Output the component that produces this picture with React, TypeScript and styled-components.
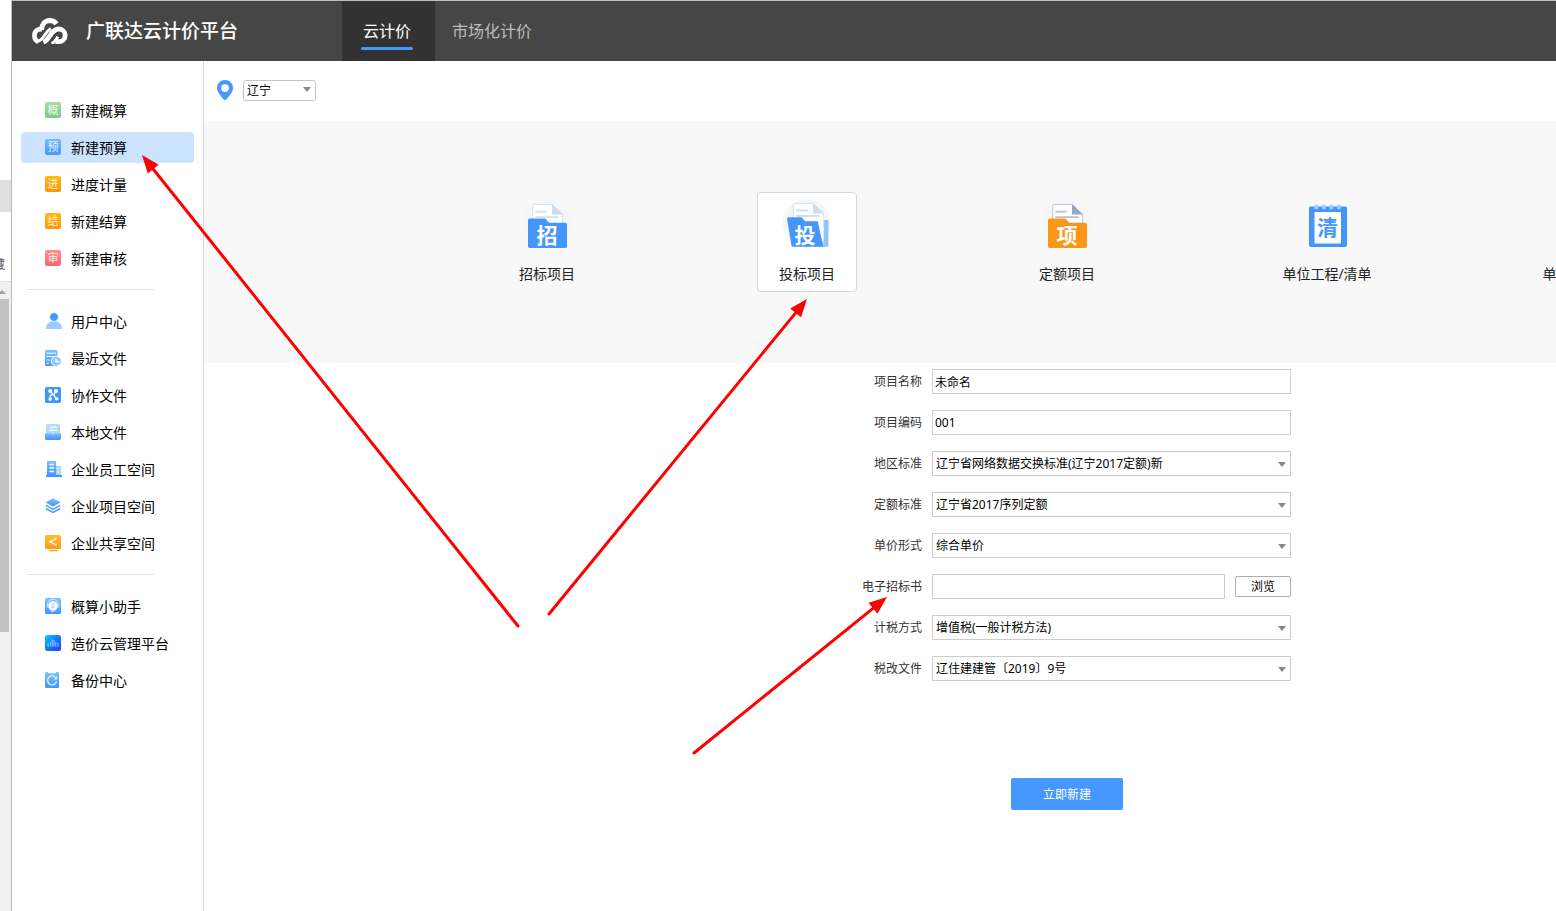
import React from "react";
import styled, { createGlobalStyle, css } from "styled-components";

const GlobalStyle = createGlobalStyle`
  *, *::before, *::after { box-sizing: border-box; }
  body {
    margin: 0;
    background: #fff;
    color: #000;
    font-family: "Noto Sans", "Noto Sans CJK SC", sans-serif;
    font-size: 14px;
    overflow-x: hidden;
  }
  button, input, select { font-family: inherit; }
`;

/* ---------- page frame ---------- */

const Page = styled.div`
  position: relative;
  display: flex;
  min-height: 100vh;
  overflow: hidden;
`;

const BackWindow = styled.div`
  flex: none;
  display: flex;
  flex-direction: column;
  width: 12px;
  border-right: 1px solid #b9b9b9;
  overflow: hidden;
`;

const BackRow = styled.div`
  margin-top: 180px;
  height: 32px;
  background: #dfdfdf;
`;

const BackText = styled.div`
  display: flex;
  justify-content: flex-end;
  height: 69px;
  padding: 43px 6px 0 0;
  font-size: 12px;
  line-height: 20px;
  color: #555;
`;

const BackScroll = styled.div`
  flex: 1;
  border-top: 1px solid #e0e0e0;
  background: #f0f0f0;
`;

const BackArrow = styled.svg`
  display: block;
  width: 9px;
  height: 17px;
`;

const BackThumb = styled.div`
  width: 9px;
  height: 333px;
  background: #c1c1c1;
`;

const AppWindow = styled.div`
  flex: 1;
  min-width: 0;
  display: flex;
  flex-direction: column;
  border-top: 1px solid #bcbfbc;
`;

/* ---------- header ---------- */

const Header = styled.header`
  display: flex;
  height: 60px;
  background: #464646;
`;

const Brand = styled.div`
  display: flex;
  align-items: center;
  gap: 18px;
  width: 330px;
  padding-left: 20px;
  color: #fff;
  font-size: 19px;
  font-weight: 500;
  line-height: 28px;
`;

const Tab = styled.button<{ $active?: boolean }>`
  display: flex;
  flex-direction: column;
  align-items: center;
  padding: ${(p) => (p.$active ? "18px 22px 0 19px" : "18px 17px 0")};
  border: 0;
  background: ${(p) => (p.$active ? "#323232" : "transparent")};
  color: ${(p) => (p.$active ? "#fff" : "#bdbdbd")};
  font-size: 16px;
  line-height: 24px;
  cursor: pointer;

  ${(p) =>
    p.$active &&
    css`
      &::after {
        content: "";
        width: 52px;
        height: 3px;
        margin-top: 4px;
        border-radius: 2px;
        background: #4598ff;
      }
    `}
`;

/* ---------- sidebar ---------- */

const Body = styled.div`
  flex: 1;
  display: flex;
`;

const Sidebar = styled.nav`
  flex: none;
  width: 192px;
  padding: 34px 9px;
  border-right: 1px solid #d9d9d9;
`;

const NavGroup = styled.div`
  display: flex;
  flex-direction: column;
  gap: 6px;

  & + & {
    margin-top: 15px;
  }
  & + &::before {
    content: "";
    width: 127px;
    height: 1px;
    margin: 0 0 10px 6px;
    background: #e3e3e3;
  }
`;

const NavItem = styled.button<{ $active?: boolean }>`
  display: flex;
  gap: 10px;
  height: 31px;
  padding: 0 0 0 24px;
  border: 0;
  border-radius: 4px;
  background: ${(p) => (p.$active ? "#cce3ff" : "transparent")};
  color: #000;
  font-size: 14px;
  line-height: 31px;
  white-space: nowrap;
  cursor: pointer;
`;

const Glyph = styled.svg`
  flex: none;
  width: 16px;
  height: 16px;
  margin-top: 7px;
  overflow: visible;
`;

const CharTile = styled.span<{ $from: string; $to: string }>`
  flex: none;
  width: 16px;
  height: 16px;
  margin-top: 7px;
  border-radius: 2px;
  background: linear-gradient(${(p) => p.$from}, ${(p) => p.$to});
  color: rgba(255, 255, 255, 0.85);
  font-size: 11px;
  line-height: 16px;
  text-align: center;
`;

/* ---------- main ---------- */

const Main = styled.main`
  flex: 1;
  min-width: 0;
  overflow: hidden;
`;

const RegionBar = styled.div`
  display: flex;
  align-items: center;
  gap: 10px;
  height: 60px;
  padding: 0 13px 2px;
`;

const PinIcon = styled.svg`
  width: 16px;
  height: 20px;
`;

const Stage = styled.div`
  display: flex;
  flex-direction: column;
  align-items: center;
  min-width: 1726px;
`;

const CardBand = styled.div`
  align-self: stretch;
  display: flex;
  justify-content: center;
  gap: 160px;
  height: 242px;
  padding-top: 71px;
  background: #f8f8f8;
`;

const Card = styled.button<{ $active?: boolean }>`
  display: flex;
  flex-direction: column;
  align-items: center;
  gap: 16px;
  width: 100px;
  height: 100px;
  padding: 7px 0 0;
  border: 1px solid ${(p) => (p.$active ? "#d3d9df" : "transparent")};
  border-radius: 4px;
  background: ${(p) => (p.$active ? "#fff" : "transparent")};
  color: #222;
  font-size: 14px;
  line-height: 20px;
  white-space: nowrap;
  cursor: pointer;
`;

const CardIcon = styled.svg`
  flex: none;
  width: 48px;
  height: 48px;
  font-size: 21px;
  font-weight: 700;
`;

/* ---------- form ---------- */

const Form = styled.form`
  display: flex;
  flex-direction: column;
  align-items: center;
  padding: 6px 0 40px;
`;

const Rows = styled.div`
  display: flex;
  flex-direction: column;
  gap: 16px;
  width: 448px;
`;

const Row = styled.div`
  display: flex;
  align-items: center;
  gap: 10px;
  height: 25px;
`;

const Label = styled.label`
  width: 79px;
  color: #333;
  font-size: 12px;
  line-height: 24px;
  text-align: right;
`;

const field = css`
  width: 100%;
  height: 25px;
  padding: 0 2px;
  border: 1px solid #cdcdcd;
  border-radius: 0;
  background: #fff;
  color: #000;
  font-size: 12px;
  outline: none;
`;

const TextInput = styled.input`
  ${field}
  flex: 1;
  min-width: 0;
`;

const SelectWrap = styled.span<{ $compact?: boolean }>`
  position: relative;
  display: flex;
  ${(p) => (p.$compact ? "width: 73px;" : "flex: 1;")}

  &::after {
    content: "";
    position: absolute;
    top: ${(p) => (p.$compact ? 7 : 11)}px;
    right: 5px;
    border: 4px solid transparent;
    border-top: 5px solid #888;
    border-bottom: 0;
    pointer-events: none;
  }
`;

const Select = styled.select<{ $compact?: boolean }>`
  ${field}
  appearance: none;
  padding: 0 20px 0 3px;
  ${(p) =>
    p.$compact &&
    css`
      height: 21px;
      border-color: #c4c4c4;
      border-radius: 3px;
    `}
`;

const BrowseButton = styled.button`
  width: 56px;
  height: 21px;
  padding: 0;
  border: 1px solid #adadad;
  border-radius: 2px;
  background: #fff;
  color: #000;
  font-size: 12px;
  line-height: 19px;
  cursor: pointer;
`;

const CreateButton = styled.button`
  width: 112px;
  height: 32px;
  margin-top: 97px;
  padding: 2px 0 0;
  border: 0;
  border-radius: 2px;
  background: #4598ff;
  color: #fff;
  font-size: 12px;
  line-height: 30px;
  cursor: pointer;
`;

/* ---------- annotation layer ---------- */

const Annotations = styled.svg`
  position: absolute;
  top: 0;
  left: 0;
  width: 100%;
  height: 100%;
  pointer-events: none;
`;

function Arrow({ from, to }: { from: [number, number]; to: [number, number] }) {
  const dx = to[0] - from[0];
  const dy = to[1] - from[1];
  const length = Math.hypot(dx, dy);
  const angle = (Math.atan2(dy, dx) * 180) / Math.PI;
  return (
    <g transform={`translate(${from[0]} ${from[1]}) rotate(${angle})`} fill="#f00">
      <line x1="0" y1="0" x2={length - 14} y2="0" stroke="#f00" strokeWidth="3" strokeLinecap="round" />
      <path d={`M${length} 0 l-18 -7 v14 z`} />
    </g>
  );
}

/* ---------- icons ---------- */

const Gradients = () => (
  <svg width="0" height="0" style={{ position: "absolute" }} aria-hidden="true">
    <defs>
      <linearGradient id="blue" x1="0" y1="0" x2="0" y2="1">
        <stop offset="0" stopColor="#7cc3ff" />
        <stop offset="1" stopColor="#3f94ff" />
      </linearGradient>
      <linearGradient id="orange" x1="0" y1="0" x2="0" y2="1">
        <stop offset="0" stopColor="#ffc02a" />
        <stop offset="1" stopColor="#ff9a12" />
      </linearGradient>
      <linearGradient id="deep" x1="0" y1="0" x2="1" y2="1">
        <stop offset="0" stopColor="#00d0ff" />
        <stop offset="0.5" stopColor="#1479ff" />
        <stop offset="1" stopColor="#2b3cf2" />
      </linearGradient>
    </defs>
  </svg>
);

const UserIcon = () => (
  <Glyph viewBox="0 0 16 16">
    <path d="M1 16c0-5 3.2-8 8-8s8 3 8 8z" fill="#9accff" />
    <circle cx="9" cy="4" r="4.3" fill="#4596fb" stroke="#fff" strokeWidth=".6" />
  </Glyph>
);

const RecentIcon = () => (
  <Glyph viewBox="0 0 16 16">
    <rect width="12.5" height="16" rx="1.5" fill="url(#blue)" />
    <path d="M1.5 3.2h9.5M1.5 6.5h8M1.5 10h3.5M1.5 13.2h2.5" stroke="#fff" strokeWidth="1.1" />
    <circle cx="11.3" cy="11.2" r="5" fill="#8fc8ff" stroke="#fff" strokeWidth="1" />
    <path d="M11 8.2v3.3h3" fill="none" stroke="#fff" strokeWidth="1.3" />
  </Glyph>
);

const CollabIcon = () => (
  <Glyph viewBox="0 0 16 16">
    <rect width="16" height="16" rx="1.6" fill="#3f96ff" />
    <path d="M5.2 4l6.4 7.8M11 4l-2 3.6M5.2 12.2V8.5L8 7.4" fill="none" stroke="#fff" strokeWidth="1.3" />
    <g fill="#fff">
      <circle cx="5.2" cy="4.1" r="2" />
      <circle cx="11" cy="4.1" r="2" />
      <circle cx="5.2" cy="12.1" r="1.8" />
      <circle cx="11.7" cy="11.8" r="1.8" />
    </g>
  </Glyph>
);

const LocalIcon = () => (
  <Glyph viewBox="0 0 16 16">
    <rect x="1" width="14" height="12" rx="1.6" fill="#b3daff" />
    <path d="M4.5 3.2h7.5M4.5 6.4h7.5" stroke="#fff" strokeWidth="1.2" />
    <path d="M0 9.2h6.6L8.2 11l1.6-1.8H16v5.3c0 .9-.6 1.5-1.5 1.5h-13C.6 16 0 15.4 0 14.5z" fill="url(#blue)" />
  </Glyph>
);

const StaffIcon = () => (
  <Glyph viewBox="0 0 16 16">
    <rect x="2" width="9" height="15" rx=".8" fill="url(#blue)" />
    <path d="M4.5 3.5h4.5M4.5 7h4.500M4.500 10.500h4.500" stroke="#fff" strokeWidth="1.400" />
    <path d="M11 5h3.600c.8 0 1.200.4 1.200 1.200V14H11z" fill="#9fd0ff" />
    <path d="M12 7.800h2.500M12 11h2.500" stroke="#fff" strokeWidth="1" />
    <rect x="1" y="14" width="16" height="2" rx=".6" fill="#3f94ff" />
  </Glyph>
);

const LayersIcon = () => (
  <Glyph viewBox="0 0 16 16">
    <path d="M8 .3L15.500 4.400 8 8.600.5 4.400z" fill="url(#blue)" />
    <path d="M.8 7.400L8 11.300l7.200-3.900M.8 10.500L8 14.400l7.200-3.900" fill="none" stroke="#4d9dff" strokeWidth="1.500" />
  </Glyph>
);

const ShareIcon = () => (
  <Glyph viewBox="0 0 16 16">
    <rect width="16" height="14" rx="1.500" fill="url(#orange)" />
    <rect x="4" y="15" width="8.500" height="1.200" rx=".5" fill="#ff9a12" />
    <path d="M10.800 3.800L5.200 6.800l5.600 3" fill="none" stroke="#fff" strokeWidth="1.200" />
    <g fill="#fff">
      <circle cx="10.800" cy="3.800" r="1.100" />
      <circle cx="5.200" cy="6.800" r="1.200" />
      <circle cx="10.800" cy="9.800" r="1.100" />
    </g>
  </Glyph>
);

const HelperIcon = () => (
  <Glyph viewBox="0 0 16 16">
    <rect width="16" height="16" rx="1.600" fill="url(#blue)" />
    <path d="M2.300 9.500V7a5.700 5.700 0 0 1 11.400 0v2.500" fill="none" stroke="#d5ebff" strokeWidth="1" />
    <circle cx="8" cy="8" r="4.800" fill="#fff" />
    <path d="M6.400 5.200L8 7.400l1.600-2.200M8 7.400V11M6.400 8h3.200M6.400 9.600h3.200" fill="none" stroke="#a5d2ff" strokeWidth=".8" />
    <path d="M5.500 13.600h4" stroke="#d5ebff" strokeWidth=".8" />
  </Glyph>
);

const CloudIcon = () => (
  <Glyph viewBox="0 0 16 16">
    <rect width="16" height="16" rx="2.500" fill="url(#deep)" />
    <path
      d="M4 11.400a1.700 1.700 0 0 1-.2-3.200M12 11.400a1.700 1.700 0 0 0 .2-3.200M5.400 7v4.500M7.200 4.300v7.200M9 5v6.500M10.800 7v4.500"
      fill="none"
      stroke="#7cc4ff"
      strokeWidth="1.100"
    />
  </Glyph>
);

const BackupIcon = () => (
  <Glyph viewBox="0 0 16 16">
    <rect width="14" height="16" rx="1.500" fill="url(#blue)" />
    <path d="M3 0h8v.5a.8.8 0 0 1-.8.8H3.800a.8.8 0 0 1-.8-.8z" fill="#fff" />
    <path d="M10.600 5.600a4.500 4.500 0 1 0 .9 3.700" fill="none" stroke="#e4f2ff" strokeWidth="1.300" />
    <path d="M12 4v3.600H8.500z" fill="#e4f2ff" />
  </Glyph>
);

const Logo = () => (
  <svg width="36" height="26" viewBox="0 0 36 26" fill="none" stroke="#fff" aria-hidden="true">
    <path d="M6.200 23.800C1.600 21.800 1 14.500 5.400 12c1.500-.9 3.200-1 4.800-.6" strokeWidth="4.600" />
    <path d="M9.600 11.800C9.800 6 13.200 2.600 17.500 2.500c3 0 5.400 1.200 7 3.400" strokeWidth="5" />
    <path d="M5.200 23.600c3.600-.6 5.300-3.200 7-5.800 1.700-2.500 3.200-5 6.600-7.200" strokeWidth="3" />
    <path d="M11.400 24.400c2.800-1.200 4.600-3.600 6.500-6.700 2.500-4 5-6.700 9-6.700a6.300 6.300 0 0 1 0 12.600h-3.400" strokeWidth="4.800" />
    <path d="M19.600 25.600c2.900-1.300 4.600-3.600 6.200-7" strokeWidth="3.200" />
  </svg>
);

const FolderIcon = ({ char, color, line, fold }: { char: string; color: string; line: string; fold: string }) => (
  <CardIcon viewBox="0 0 48 48">
    <circle cx="24" cy="23.500" r="24" fill="#f5f6f8" />
    <path d="M11.500 4.400H29l10.600 10V30H9.700V6.200c0-1 .8-1.800 1.800-1.800z" fill="#fff" stroke={line} strokeWidth=".9" />
    <path d="M29 4l11 10.600H29z" fill={fold} />
    <path d="M12.500 11.700h11M12.500 17.200h23" stroke={line} strokeWidth="1.800" />
    <path d="M7 18.500h15.300l3.800 4.300h16c1.200 0 1.900.7 1.900 1.900v21.500c0 1.200-.7 1.800-1.900 1.800H7c-1.200 0-2-.6-2-1.800V20.400c0-1.200.8-1.900 2-1.900z" fill={color} />
    <text x="24" y="42.500" textAnchor="middle" fill="#fff">
      {char}
    </text>
  </CardIcon>
);

const OpenFolderIcon = ({ char }: { char: string }) => (
  <CardIcon viewBox="0 0 48 48">
    <circle cx="24" cy="23.500" r="24" fill="#f5f6f8" />
    <path d="M32 20h12c1 0 1.500.5 1.500 1.500v23.700c0 1-.5 1.500-1.500 1.500H32z" fill="#8fc3ff" />
    <path d="M12.200 3.400H30l10.600 10V30H10.400V5.200c0-1 .8-1.800 1.800-1.800z" fill="#fff" stroke="#cfdff0" strokeWidth=".9" />
    <path d="M30 3l11 10.600H30z" fill="#cfdcec" />
    <path d="M34 28h6.600v16z" fill="#fff" />
    <path d="M13.300 10.500h11.500M13.300 16h23" stroke="#cfdff0" strokeWidth="1.800" />
    <path d="M5.800 17.300h12.700l3.900 4h12.400l5.400 25.400H10c-.8 0-1.300-.5-1.500-1.300L4.100 19.200c-.2-1.200.5-1.900 1.700-1.900z" fill="#4596fb" />
    <text x="22" y="42.500" textAnchor="middle" fill="#fff">
      {char}
    </text>
  </CardIcon>
);

const NotepadIcon = ({ char }: { char: string }) => (
  <CardIcon viewBox="0 0 48 48">
    <rect x="6" y="6.500" width="38" height="40.500" rx="1.800" fill="#4596fb" />
    <rect x="11.500" y="12" width="26.500" height="31.500" rx="1" fill="#fff" />
    <g fill="#9ccbff">
      <ellipse cx="13.300" cy="7" rx="2.200" ry="2.500" />
      <ellipse cx="20.800" cy="7" rx="2.200" ry="2.500" />
      <ellipse cx="28.300" cy="7" rx="2.200" ry="2.500" />
      <ellipse cx="36" cy="7" rx="2.200" ry="2.500" />
    </g>
    <text x="24.500" y="35" textAnchor="middle" fill="#4596fb">
      {char}
    </text>
  </CardIcon>
);

/* ---------- data ---------- */

const createItems = [
  { char: "概", label: "新建概算", from: "#a5dfa4", to: "#7cc985" },
  { char: "预", label: "新建预算", from: "#6db9ff", to: "#4598ff", active: true },
  { char: "进", label: "进度计量", from: "#ffba10", to: "#ff960a" },
  { char: "结", label: "新建结算", from: "#ffba10", to: "#ff960a" },
  { char: "审", label: "新建审核", from: "#ff8f90", to: "#fc6470" },
];

const spaceItems = [
  { label: "用户中心", Icon: UserIcon },
  { label: "最近文件", Icon: RecentIcon },
  { label: "协作文件", Icon: CollabIcon },
  { label: "本地文件", Icon: LocalIcon },
  { label: "企业员工空间", Icon: StaffIcon },
  { label: "企业项目空间", Icon: LayersIcon },
  { label: "企业共享空间", Icon: ShareIcon },
];

const toolItems = [
  { label: "概算小助手", Icon: HelperIcon },
  { label: "造价云管理平台", Icon: CloudIcon },
  { label: "备份中心", Icon: BackupIcon },
];

function SelectRow({ id, label, value }: { id: string; label: string; value: string }) {
  return (
    <Row>
      <Label htmlFor={id}>{label}</Label>
      <SelectWrap>
        <Select id={id}>
          <option>{value}</option>
        </Select>
      </SelectWrap>
    </Row>
  );
}

export default function App() {
  return (
    <Page>
      <GlobalStyle />
      <Gradients />
      <BackWindow aria-hidden="true">
        <BackRow />
        <BackText>藏</BackText>
        <BackScroll>
          <BackArrow viewBox="0 0 9 17">
            <path d="M-2 12l4-4 4 4z" fill="#a0a0a0" />
          </BackArrow>
          <BackThumb />
        </BackScroll>
      </BackWindow>

      <AppWindow>
        <Header>
          <Brand>
            <Logo />
            <span>广联达云计价平台</span>
          </Brand>
          <Tab $active>云计价</Tab>
          <Tab>市场化计价</Tab>
        </Header>

        <Body>
          <Sidebar>
            <NavGroup>
              {createItems.map((item) => (
                <NavItem key={item.label} $active={item.active}>
                  <CharTile $from={item.from} $to={item.to}>
                    {item.char}
                  </CharTile>
                  {item.label}
                </NavItem>
              ))}
            </NavGroup>
            <NavGroup>
              {spaceItems.map(({ label, Icon }) => (
                <NavItem key={label}>
                  <Icon />
                  {label}
                </NavItem>
              ))}
            </NavGroup>
            <NavGroup>
              {toolItems.map(({ label, Icon }) => (
                <NavItem key={label}>
                  <Icon />
                  {label}
                </NavItem>
              ))}
            </NavGroup>
          </Sidebar>

          <Main>
            <RegionBar>
              <PinIcon viewBox="0 0 16 20" aria-hidden="true">
                <path
                  d="M8 0a8 8 0 0 1 8 8c0 4-3.500 7.500-6.500 11.300-.9 1-2.100 1-3 0C3.500 15.500 0 12 0 8a8 8 0 0 1 8-8zm0 4.200a3.900 3.900 0 1 0 0 7.800 3.900 3.900 0 0 0 0-7.800z"
                  fill="#4598ff"
                  fillRule="evenodd"
                />
              </PinIcon>
              <SelectWrap $compact>
                <Select $compact aria-label="地区">
                  <option>辽宁</option>
                </Select>
              </SelectWrap>
            </RegionBar>

            <Stage>
              <CardBand>
                <Card>
                  <FolderIcon char="招" color="#4596fb" line="#cfdff0" fold="#cfdcec" />
                  招标项目
                </Card>
                <Card $active>
                  <OpenFolderIcon char="投" />
                  投标项目
                </Card>
                <Card>
                  <FolderIcon char="项" color="#fb9717" line="#b4c2d3" fold="#94a8c1" />
                  定额项目
                </Card>
                <Card>
                  <NotepadIcon char="清" />
                  单位工程/清单
                </Card>
                <Card>
                  <NotepadIcon char="定" />
                  单位工程/定额
                </Card>
              </CardBand>

              <Form onSubmit={(e) => e.preventDefault()}>
                <Rows>
                  <Row>
                    <Label htmlFor="name">项目名称</Label>
                    <TextInput id="name" defaultValue="未命名" />
                  </Row>
                  <Row>
                    <Label htmlFor="code">项目编码</Label>
                    <TextInput id="code" defaultValue="001" />
                  </Row>
                  <SelectRow id="region" label="地区标准" value="辽宁省网络数据交换标准(辽宁2017定额)新" />
                  <SelectRow id="quota" label="定额标准" value="辽宁省2017序列定额" />
                  <SelectRow id="price" label="单价形式" value="综合单价" />
                  <Row>
                    <Label htmlFor="tender">电子招标书</Label>
                    <TextInput id="tender" />
                    <BrowseButton type="button">浏览</BrowseButton>
                  </Row>
                  <SelectRow id="tax" label="计税方式" value="增值税(一般计税方法)" />
                  <SelectRow id="taxdoc" label="税改文件" value="辽住建建管〔2019〕9号" />
                </Rows>
                <CreateButton type="submit">立即新建</CreateButton>
              </Form>
            </Stage>
          </Main>
        </Body>
      </AppWindow>

      <Annotations aria-hidden="true">
        <Arrow from={[518, 626]} to={[142, 155]} />
        <Arrow from={[549, 614]} to={[807, 299]} />
        <Arrow from={[694, 753]} to={[887, 597]} />
      </Annotations>
    </Page>
  );
}
